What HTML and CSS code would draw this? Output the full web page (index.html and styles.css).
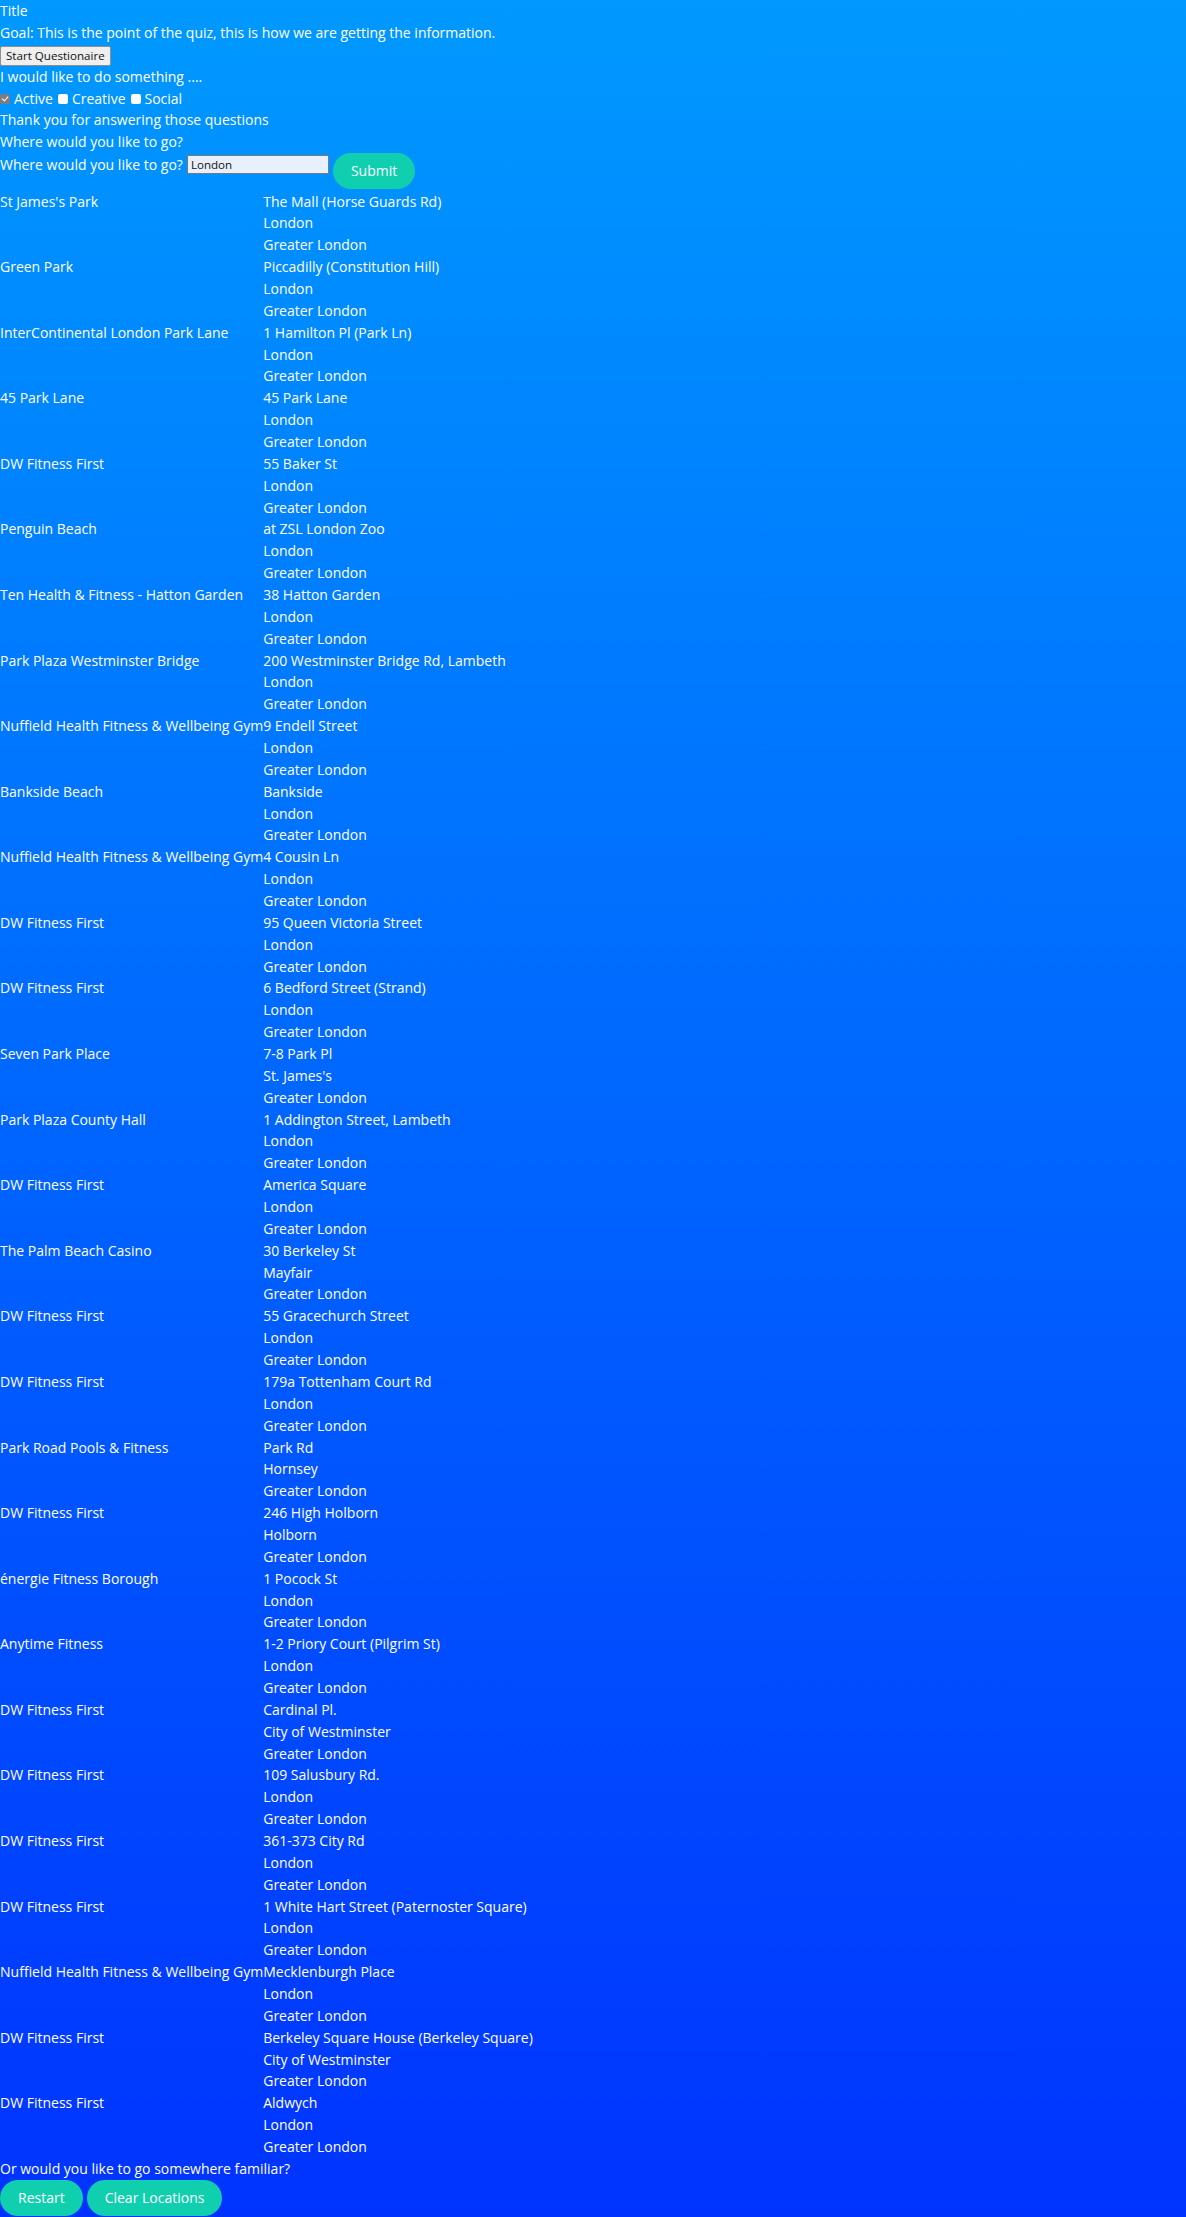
FILE: index.html
```html
<!DOCTYPE html>
<html lang="en">
<head>
<meta charset="utf-8">
<title>Quiz</title>
<link rel="stylesheet" href="styles.css">
</head>
<body>
<div class="page">
  <div class="line">Title</div>
  <div class="line">Goal: This is the point of the quiz, this is how we are getting the information.</div>
  <div class="line"><button class="start-btn" type="button">Start Questionaire</button></div>
  <div class="line">I would like to do something ....</div>
  <div class="line checks">
    <label class="check"><input type="checkbox" class="box" checked disabled> Active</label>
    <label class="check"><input type="checkbox" class="box" disabled> Creative</label>
    <label class="check"><input type="checkbox" class="box" disabled> Social</label>
  </div>
  <div class="line">Thank you for answering those questions</div>
  <div class="line">Where would you like to go?</div>
  <form class="search-row">
    <label class="line" for="place">Where would you like to go?</label>
    <input id="place" class="place-input" type="text" value="London">
    <button class="pill" type="button">Submit</button>
  </form>

  <div class="results">
    <div class="name">St James's Park</div>
    <div class="addr"><div>The Mall (Horse Guards Rd)</div><div>London</div><div>Greater London</div></div>
    <div class="name">Green Park</div>
    <div class="addr"><div>Piccadilly (Constitution Hill)</div><div>London</div><div>Greater London</div></div>
    <div class="name">InterContinental London Park Lane</div>
    <div class="addr"><div>1 Hamilton Pl (Park Ln)</div><div>London</div><div>Greater London</div></div>
    <div class="name">45 Park Lane</div>
    <div class="addr"><div>45 Park Lane</div><div>London</div><div>Greater London</div></div>
    <div class="name">DW Fitness First</div>
    <div class="addr"><div>55 Baker St</div><div>London</div><div>Greater London</div></div>
    <div class="name">Penguin Beach</div>
    <div class="addr"><div>at ZSL London Zoo</div><div>London</div><div>Greater London</div></div>
    <div class="name">Ten Health &amp; Fitness - Hatton Garden</div>
    <div class="addr"><div>38 Hatton Garden</div><div>London</div><div>Greater London</div></div>
    <div class="name">Park Plaza Westminster Bridge</div>
    <div class="addr"><div>200 Westminster Bridge Rd, Lambeth</div><div>London</div><div>Greater London</div></div>
    <div class="name">Nuffield Health Fitness &amp; Wellbeing Gym</div>
    <div class="addr"><div>9 Endell Street</div><div>London</div><div>Greater London</div></div>
    <div class="name">Bankside Beach</div>
    <div class="addr"><div>Bankside</div><div>London</div><div>Greater London</div></div>
    <div class="name">Nuffield Health Fitness &amp; Wellbeing Gym</div>
    <div class="addr"><div>4 Cousin Ln</div><div>London</div><div>Greater London</div></div>
    <div class="name">DW Fitness First</div>
    <div class="addr"><div>95 Queen Victoria Street</div><div>London</div><div>Greater London</div></div>
    <div class="name">DW Fitness First</div>
    <div class="addr"><div>6 Bedford Street (Strand)</div><div>London</div><div>Greater London</div></div>
    <div class="name">Seven Park Place</div>
    <div class="addr"><div>7-8 Park Pl</div><div>St. James's</div><div>Greater London</div></div>
    <div class="name">Park Plaza County Hall</div>
    <div class="addr"><div>1 Addington Street, Lambeth</div><div>London</div><div>Greater London</div></div>
    <div class="name">DW Fitness First</div>
    <div class="addr"><div>America Square</div><div>London</div><div>Greater London</div></div>
    <div class="name">The Palm Beach Casino</div>
    <div class="addr"><div>30 Berkeley St</div><div>Mayfair</div><div>Greater London</div></div>
    <div class="name">DW Fitness First</div>
    <div class="addr"><div>55 Gracechurch Street</div><div>London</div><div>Greater London</div></div>
    <div class="name">DW Fitness First</div>
    <div class="addr"><div>179a Tottenham Court Rd</div><div>London</div><div>Greater London</div></div>
    <div class="name">Park Road Pools &amp; Fitness</div>
    <div class="addr"><div>Park Rd</div><div>Hornsey</div><div>Greater London</div></div>
    <div class="name">DW Fitness First</div>
    <div class="addr"><div>246 High Holborn</div><div>Holborn</div><div>Greater London</div></div>
    <div class="name">énergie Fitness Borough</div>
    <div class="addr"><div>1 Pocock St</div><div>London</div><div>Greater London</div></div>
    <div class="name">Anytime Fitness</div>
    <div class="addr"><div>1-2 Priory Court (Pilgrim St)</div><div>London</div><div>Greater London</div></div>
    <div class="name">DW Fitness First</div>
    <div class="addr"><div>Cardinal Pl.</div><div>City of Westminster</div><div>Greater London</div></div>
    <div class="name">DW Fitness First</div>
    <div class="addr"><div>109 Salusbury Rd.</div><div>London</div><div>Greater London</div></div>
    <div class="name">DW Fitness First</div>
    <div class="addr"><div>361-373 City Rd</div><div>London</div><div>Greater London</div></div>
    <div class="name">DW Fitness First</div>
    <div class="addr"><div>1 White Hart Street (Paternoster Square)</div><div>London</div><div>Greater London</div></div>
    <div class="name">Nuffield Health Fitness &amp; Wellbeing Gym</div>
    <div class="addr"><div>Mecklenburgh Place</div><div>London</div><div>Greater London</div></div>
    <div class="name">DW Fitness First</div>
    <div class="addr"><div>Berkeley Square House (Berkeley Square)</div><div>City of Westminster</div><div>Greater London</div></div>
    <div class="name">DW Fitness First</div>
    <div class="addr"><div>Aldwych</div><div>London</div><div>Greater London</div></div>
  </div>

  <div class="line">Or would you like to go somewhere familiar?</div>
  <div class="actions">
    <button class="pill" type="button">Restart</button>
    <button class="pill" type="button">Clear Locations</button>
  </div>
</div>
</body>
</html>
```
FILE: styles.css
```css
html {
  margin: 0;
  padding: 0;
  background: #0033ff;
}

body {
  margin: 0;
  padding: 0;
  min-height: 2217px;
  background: linear-gradient(to bottom, #0099ff 0%, #0033ff 100%);
  color: #ffffff;
  font-family: "Open Sans", "Noto Sans", sans-serif;
  font-size: 14px;
  line-height: 21.87px;
}

.page {
  display: flex;
  flex-direction: column;
}

.line {
  display: block;
  height: 21.87px;
  line-height: 21.87px;
  white-space: nowrap;
}

.start-btn {
  display: inline-block;
  box-sizing: border-box;
  height: 20px;
  margin: 0;
  padding: 0 5px;
  vertical-align: middle;
  background: #efefef;
  border: 1px solid #8f8f8f;
  border-radius: 2px;
  color: #111111;
  font-family: "Open Sans", "Noto Sans", sans-serif;
  font-size: 11.6px;
  line-height: 18px;
}

.checks {
  display: flex;
  align-items: center;
  gap: 5px;
  padding-top: 1px;
  box-sizing: border-box;
}

.check {
  display: inline-flex;
  align-items: center;
  gap: 4px;
}

.box {
  appearance: none;
  -webkit-appearance: none;
  position: relative;
  box-sizing: border-box;
  width: 10px;
  height: 10px;
  margin: 0;
  background: #ffffff;
  border: none;
  border-radius: 2px;
}

.box:checked {
  background: #7d7d7d;
}

.box:checked::after {
  content: "";
  position: absolute;
  left: 3px;
  top: 1px;
  width: 3px;
  height: 5px;
  border: solid #ffffff;
  border-width: 0 1.5px 1.5px 0;
  transform: rotate(40deg);
}

.search-row {
  display: flex;
  align-items: flex-start;
  margin: 0;
  height: 37.5px;
}

.search-row .line {
  padding-top: 1px;
}

.place-input {
  box-sizing: border-box;
  width: 142px;
  height: 19px;
  margin: 2px 0 0 4px;
  padding: 0 3px;
  background: #e8f0fe;
  border: 1px solid #7a7a7a;
  border-radius: 0;
  color: #111111;
  font-family: "Open Sans", "Noto Sans", sans-serif;
  font-size: 11.6px;
  line-height: 17px;
}

.pill {
  box-sizing: border-box;
  height: 36px;
  margin: 0;
  padding: 0 18px;
  background: #0fcfae;
  border: none;
  border-radius: 18px;
  color: #ffffff;
  font-family: "Open Sans", "Noto Sans", sans-serif;
  font-size: 14px;
  line-height: 36px;
  white-space: nowrap;
}

.search-row .pill {
  margin-left: 4px;
}

.results {
  display: grid;
  grid-template-columns: max-content 1fr;
}

.name,
.addr > div {
  height: 21.87px;
  line-height: 21.87px;
  white-space: nowrap;
}

.actions {
  display: flex;
  gap: 4px;
}
```
